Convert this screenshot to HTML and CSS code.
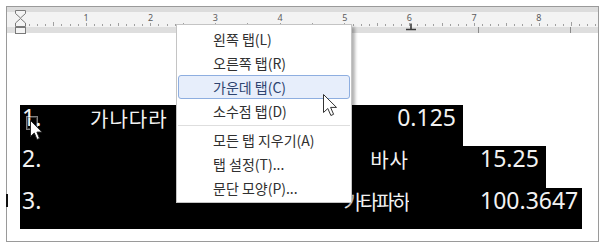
FILE: index.html
```html
<!DOCTYPE html>
<html>
<head>
    <title>탭 설정</title>
    <link rel="stylesheet" href="styles.css">
</head>
<body>
    <div class="frame">
        <div class="ruler">
            <div class="ruler-top"></div>
            <div class="ruler-scale">
                <div class="ruler-nums">
                    <span>1</span><span>2</span><span>3</span><span>4</span>
                    <span>5</span><span>6</span><span>7</span><span>8</span>
                </div>
            </div>
            <div class="ruler-bottom"></div>
            <!-- indent marker (hourglass) -->
            <svg class="indent-marker" width="13" height="26" viewBox="0 0 13 26">
                <path d="M1.5 1.5H11.5V4.5L6.5 9L1.5 4.5Z" fill="#f4f4f4" stroke="#7a7a7a"/>
                <path d="M6.5 9.5L11.5 14V17.5H1.5V14Z" fill="#f4f4f4" stroke="#7a7a7a"/>
                <rect x="1.5" y="18.5" width="10" height="6" fill="#f4f4f4" stroke="#7a7a7a"/>
            </svg>
            <svg class="tab-marker" width="12" height="8" viewBox="0 0 12 8">
                <path d="M6 0.5V6.5M1 6.5H11" stroke="#3a3a3a" stroke-width="1.6" fill="none"/>
            </svg>
        </div>

        <div class="page">
            <div class="row">
                <span class="cell-no">1.</span>
                <span class="cell-text"><span class="ko">가나다라</span></span>
                <span class="cell-num left-num">0.125</span>
            </div>
            <div class="row">
                <span class="cell-no">2.</span>
                <span class="cell-text right"><span class="ko">바사</span></span>
                <span class="cell-num num2">15.25</span>
            </div>
            <div class="row">
                <span class="cell-no">3.</span>
                <span class="cell-text right"><span class="ko tight">카타파하</span></span>
                <span class="cell-num num3">100.3647</span>
            </div>
        </div>

        <span class="caret-bar"></span>

        <svg class="drag-cursor" width="20" height="26" viewBox="0 0 20 26">
            <rect x="0.5" y="0.5" width="11" height="13" fill="none" stroke="#fff" stroke-dasharray="1 1"/>
            <rect x="1.5" y="1.5" width="9" height="11" fill="none" stroke="#777" stroke-dasharray="1 1"/>
            <path d="M4.5 4.5V20.5L8.3 17L11 23.5L13.5 22.4L10.9 16.1H16Z" fill="#fff" stroke="#222"/>
        </svg>

        <div class="menu">
            <div class="menu-item">왼쪽 탭(L)</div>
            <div class="menu-item">오른쪽 탭(R)</div>
            <div class="menu-item hover">가운데 탭(C)</div>
            <div class="menu-item">소수점 탭(D)</div>
            <div class="menu-sep"></div>
            <div class="menu-item">모든 탭 지우기(A)</div>
            <div class="menu-item">탭 설정(T)...</div>
            <div class="menu-item">문단 모양(P)...</div>
        </div>

        <svg class="menu-cursor" width="16" height="24" viewBox="0 0 16 24">
            <path d="M1.5 1.5V19.5L5.8 15.5L8.9 22.5L11.6 21.3L8.6 14.4H14.5Z" fill="#fff" stroke="#333" stroke-linejoin="round"/>
        </svg>
    </div>
</body>
</html>
```

FILE: styles.css
```css
body { margin: 0; background: #fff; font-family: "Noto Sans", "Noto Sans CJK KR", sans-serif; }

.frame {
    position: relative;
    width: 593px;
    height: 236px;
    margin: 6px 0 0 6px;
    border: 1px solid #9a9a9a;
    box-sizing: border-box;
}

/* ruler */
.ruler { position: relative; }
.ruler-top { height: 5px; background: #dcdcdc; }
.ruler-scale {
    height: 15px;
    background-color: #f3f3f3;
    background-image:
        repeating-linear-gradient(90deg, #a0a0a0 0 1px, transparent 1px 8.0875px),
        repeating-linear-gradient(90deg, #a0a0a0 0 1px, transparent 1px 32.35px);
    background-repeat: no-repeat;
    background-size: calc(100% - 14px) 2px, calc(100% - 14px) 4px;
    background-position: 14px calc(100% - 1px), 14px calc(100% - 1px);
}
.ruler-nums {
    display: flex;
    padding-left: 46.65px;
    font-family: "Noto Sans", sans-serif;
    font-size: 9px;
    line-height: 11px;
    color: #5c5c5c;
}
.ruler-nums span { width: 64.7px; text-align: center; background: #f3f3f3; }
.ruler-bottom {
    height: 6px;
    background-color: #dedede;
    background-image: linear-gradient(#8a8a8a, #8a8a8a), linear-gradient(#8a8a8a, #8a8a8a);
    background-repeat: no-repeat;
    background-size: 1px 6px, 1px 6px;
    background-position: 471px 0, 563px 0;
}
.indent-marker { position: absolute; left: 7px; top: 2px; }
.tab-marker { position: absolute; left: 398px; top: 16px; }

/* text rows */
.page { padding: 72px 0 0 13px; }
.row {
    display: flex;
    width: fit-content;
    height: 41.4px;
    background: #000;
    color: #f2f2f2;
    font-size: 23px;
    line-height: 24px;
    white-space: nowrap;
}
.cell-no { width: 70px; padding-left: 2px; box-sizing: border-box; }
.cell-text { width: 290px; }
.cell-text.right { width: 319px; text-align: right; overflow: hidden; }
.ko {
    font-family: "Noto Sans CJK KR", sans-serif;
    font-size: 20px;
    letter-spacing: 1px;
    line-height: 1;
    vertical-align: -1px;
}
.ko.tight { letter-spacing: -2px; }
.cell-num { box-sizing: border-box; }
.left-num { width: 83px; text-align: right; padding-right: 7px; }
.num2 { width: 137px; padding-left: 71px; }
.num3 { width: 173px; padding-left: 71px; }

.caret-bar {
    position: absolute;
    left: -1px;
    top: 187px;
    width: 2px;
    height: 13px;
    background: #111;
}
.drag-cursor { position: absolute; left: 19px; top: 109px; }

/* context menu */
.menu {
    position: absolute;
    left: 169px;
    top: 17px;
    width: 176px;
    padding: 2px 1px;
    background: #fff;
    border: 1px solid #c4c4c4;
    box-sizing: border-box;
    box-shadow: 3px 3px 3px rgba(0, 0, 0, 0.3);
    font-family: "Noto Sans CJK KR", sans-serif;
    font-size: 14px;
    color: #303030;
}
.menu-item {
    height: 24px;
    line-height: 22px;
    padding-left: 34px;
    border: 1px solid transparent;
    border-radius: 3px;
    box-sizing: border-box;
}
.menu-item.hover { background: #e7eefb; border-color: #8eaee0; color: #2e4470; }
.menu-sep { height: 1px; margin: 2px 0; background: #dedede; }
.menu-cursor { position: absolute; left: 315px; top: 86px; }
```
